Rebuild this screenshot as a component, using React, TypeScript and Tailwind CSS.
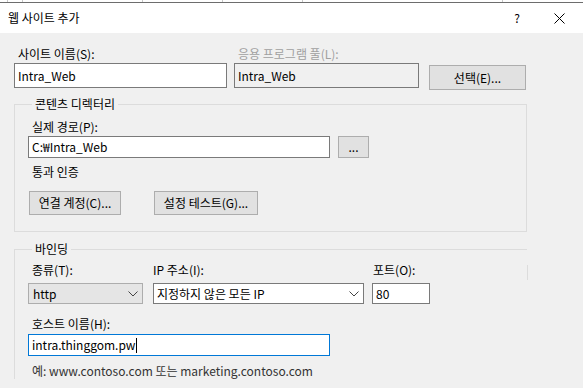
import React from 'react';

const Chevron = () => (
	<svg width="10" height="6" viewBox="0 0 10 6" className="shrink-0">
		<path d="M0.5 0.5 L5 5 L9.5 0.5" fill="none" stroke="#444" strokeWidth="1" />
	</svg>
);

const Btn = ({ label, className }: { label: string; className: string }) => (
	<div
		className={`flex items-center justify-center border border-[#adadad] bg-[#e1e1e1] text-black ${className}`}
	>
		{label}
	</div>
);

const App: React.FC = () => {
	return (
		<div
			className="relative w-[583px] h-[388px] overflow-hidden bg-[#f0f0f0] text-[12px] leading-[16px] text-black"
			style={{ fontFamily: '"Noto Sans CJK KR", "Noto Sans", sans-serif' }}
		>
			{/* window behind */}
			<div className="relative h-[3px] bg-white border-b border-[#6d6d6d]">
				{[7, 22, 142, 222, 302, 502].map((x) => (
					<span key={x} className="absolute top-0 h-[2px] w-px bg-[#c8c8c8]" style={{ left: x }} />
				))}
			</div>

			{/* title bar */}
			<div className="flex h-[30px] items-center bg-white">
				<span className="ml-[8px]">웹 사이트 추가</span>
				<span className="ml-auto w-[10px] text-center">?</span>
				<svg width="11" height="11" viewBox="0 0 11 11" className="ml-[32px] mr-[18px]">
					<path d="M0.5 0.5 L10.5 10.5 M10.5 0.5 L0.5 10.5" stroke="#000" strokeWidth="1" />
				</svg>
			</div>

			<div className="pl-[14px]">
				{/* site name row */}
				<div className="flex pt-[13px]">
					<div className="w-[213px]">
						<div className="pl-[4px] h-[16px]">사이트 이름(S):</div>
						<div className="mt-[1px] flex h-[25px] items-center border border-[#7a7a7a] bg-white pl-[3px]">
							Intra_Web
						</div>
					</div>
					<div className="ml-[7px] w-[185px]">
						<div className="pl-[4px] h-[16px] text-[#a0a0a0]">응용 프로그램 풀(L):</div>
						<div className="mt-[1px] flex h-[25px] items-center border border-[#7a7a7a] bg-[#f0f0f0] pl-[3px]">
							Intra_Web
						</div>
					</div>
					<Btn label="선택(E)..." className="ml-[10px] mt-[19px] h-[25px] w-[97px]" />
				</div>

				{/* content directory */}
				<fieldset className="mt-[6px] w-[513px] border border-[#dcdcdc] pl-[13px] pb-[16px]">
					<legend className="ml-[4px] px-[3px] leading-[16px]">콘텐츠 디렉터리</legend>
					<div className="mt-[7px] ml-[4px] h-[16px]">실제 경로(P):</div>
					<div className="mt-[1px] flex">
						<div className="flex h-[22px] w-[302px] items-center border border-[#7a7a7a] bg-white pl-[3px]">
							C:₩Intra_Web
						</div>
						<Btn label="..." className="ml-[8px] h-[22px] w-[31px]" />
					</div>
					<div className="mt-[6px] ml-[4px] h-[16px]">통과 인증</div>
					<div className="mt-[11px] flex">
						<Btn label="연결 계정(C)..." className="ml-[1px] h-[24px] w-[92px]" />
						<Btn label="설정 테스트(G)..." className="ml-[33px] h-[24px] w-[104px]" />
					</div>
				</fieldset>

				{/* binding */}
				<fieldset className="relative mt-[9px] w-[513px] border-t border-l border-[#dcdcdc] pl-[13px]">
					<legend className="ml-[4px] px-[3px] leading-[16px]">바인딩</legend>
					<span className="absolute right-[-1px] top-[8px] h-[15px] w-px bg-[#dcdcdc]" />
					<div className="mt-[5px] flex">
						<div className="w-[115px]">
							<div className="ml-[4px] h-[16px]">종류(T):</div>
							<div className="mt-[5px] flex h-[21px] items-center justify-between border border-[#adadad] bg-[#e5e5e5] pl-[4px] pr-[4px]">
								<span>http</span>
								<Chevron />
							</div>
						</div>
						<div className="ml-[10px] w-[211px]">
							<div className="h-[16px]">IP 주소(I):</div>
							<div className="mt-[5px] flex h-[21px] items-center justify-between border border-[#7a7a7a] bg-white pl-[3px] pr-[4px]">
								<span>지정하지 않은 모든 IP</span>
								<Chevron />
							</div>
						</div>
						<div className="ml-[8px] w-[58px]">
							<div className="ml-[1px] h-[16px]">포트(O):</div>
							<div className="mt-[5px] flex h-[21px] items-center border border-[#7a7a7a] bg-white pl-[3px]">
								80
							</div>
						</div>
					</div>
					<div className="mt-[12px] ml-[4px] h-[16px]">호스트 이름(H):</div>
					<div className="mt-[2px] flex h-[22px] w-[302px] items-center border border-[#0078d7] bg-white pl-[3px]">
						<span>intra.thinggom.pw</span>
						<span className="ml-px h-[15px] w-px bg-black" />
					</div>
					<div className="mt-[7px] ml-[4px] h-[16px] text-[#333]">
						예: www.contoso.com 또는 marketing.contoso.com
					</div>
				</fieldset>
			</div>
		</div>
	);
};

export default App;
